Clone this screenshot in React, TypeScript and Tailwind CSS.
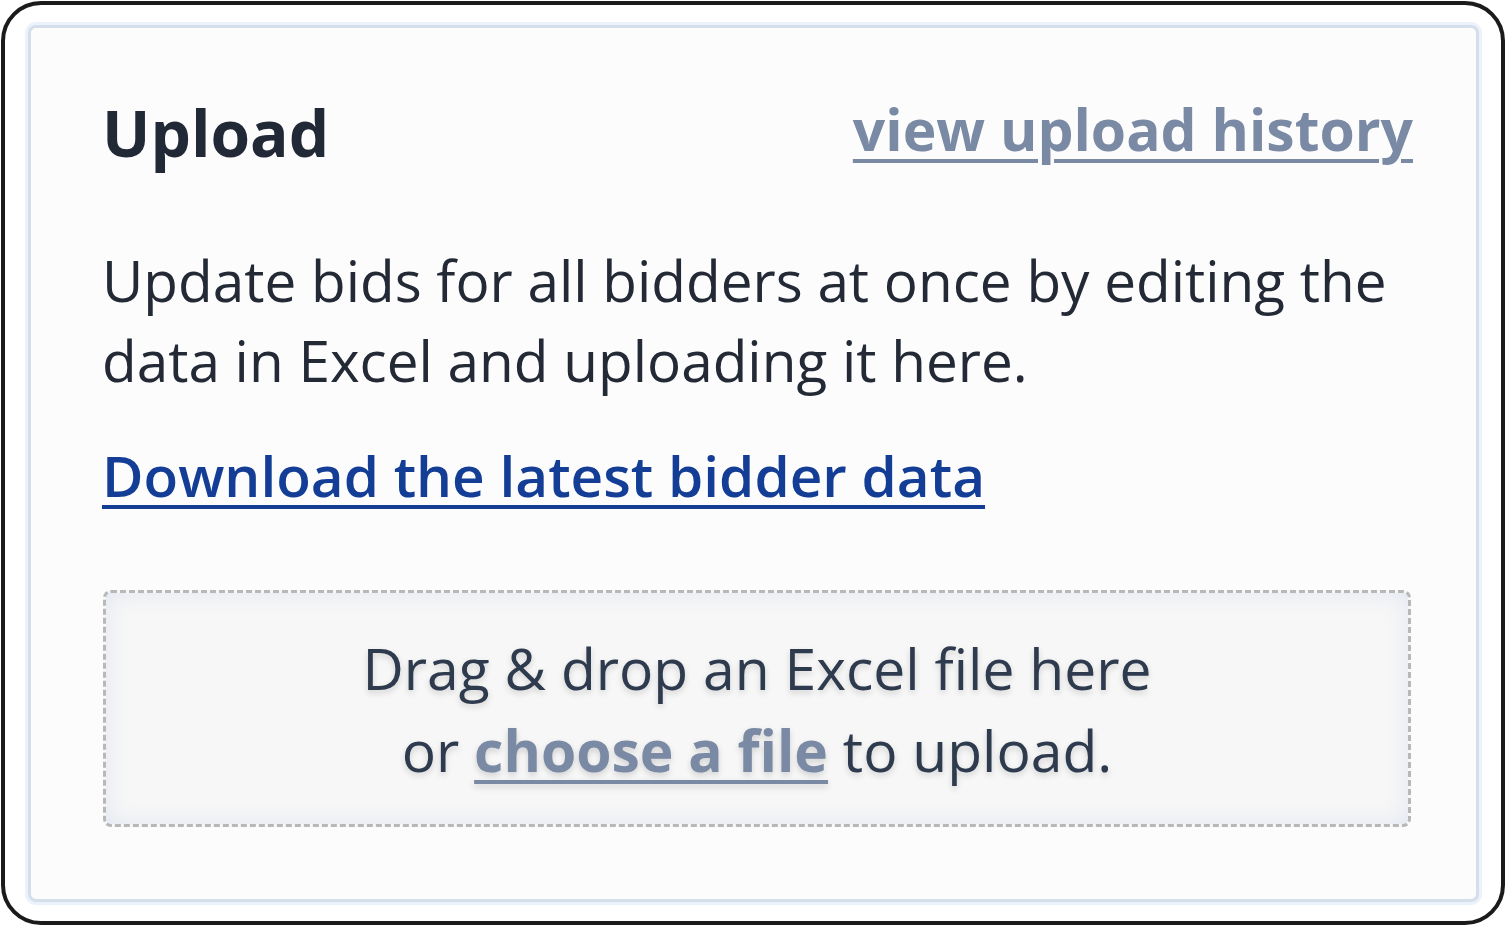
export default function App() {
  return (
    <div
      className="flex h-[926px] w-[1506px] bg-white p-[1px] text-[#222a37]"
      style={{ fontFamily: '"Open Sans", "Noto Sans", sans-serif' }}
    >
      <div className="flex flex-1 rounded-[40px] border-[4px] border-[#1c1b1c] bg-white pt-[20px] pr-[22px] pb-[19px] pl-[23px]">
        <div className="flex flex-1 flex-col rounded-[8px] border-[3px] border-[#d5deeb] bg-[#fcfcfd] pt-[62px] pr-[65px] pl-[71px] shadow-[0_0_0_3px_#ecf2fb]">
          <div className="flex items-start justify-between">
            <h1 className="text-[64px] leading-[86px] font-bold text-[#212836]">Upload</h1>
            <a
              href="#"
              className="-mt-[4px] -mr-[2px] text-[57px] leading-[86px] font-bold text-[#7a8aa5] underline decoration-[4px] underline-offset-[8px]"
            >
              view upload history
            </a>
          </div>
          <p className="mt-[64px] text-[56.7px] leading-[80px] text-[#232a36]">
            Update bids for all bidders at once by editing the data in Excel and uploading it here.
          </p>
          <a
            href="#"
            className="mt-[35px] self-start text-[56.7px] leading-[80px] font-semibold text-[#143e96] underline decoration-[4px] underline-offset-[8px]"
          >
            Download the latest bidder data
          </a>
          <div className="mt-[75px] ml-[1px] flex h-[237px] flex-col items-center justify-center rounded-[8px] border-[3px] border-dashed border-[#b8b8b8] bg-[#f7f7f7] text-[57px] leading-[82px] text-[#2e3a4d] shadow-[inset_0_0_24px_#e1e6f1] [text-shadow:0_3px_6px_rgba(0,0,0,0.16)]">
            <span>Drag &amp; drop an Excel file here</span>
            <span>
              or{' '}
              <a
                href="#"
                className="font-bold text-[#7a8aa5] underline decoration-[4px] underline-offset-[8px]"
              >
                choose a file
              </a>{' '}
              to upload.
            </span>
          </div>
        </div>
      </div>
    </div>
  );
}
